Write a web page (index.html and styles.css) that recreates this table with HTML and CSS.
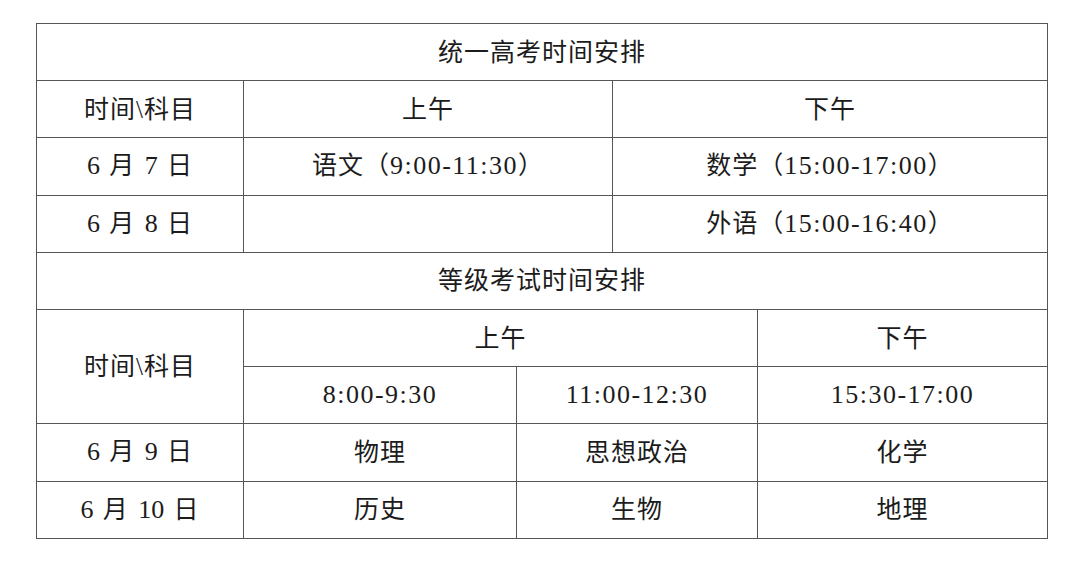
FILE: index.html
```html
<!DOCTYPE html>
<html lang="zh-CN">
<head>
<meta charset="utf-8">
<title>高考时间安排</title>
<link rel="stylesheet" href="styles.css">
</head>
<body>
<table class="sched">
  <colgroup>
    <col class="c1"><col class="c2"><col class="c3"><col class="c4"><col class="c5">
  </colgroup>
  <tbody>
    <tr><td colspan="5" class="title">统一高考时间安排</td></tr>
    <tr><td>时间\科目</td><td colspan="2">上午</td><td colspan="2">下午</td></tr>
    <tr><td class="date"><span class="n">6</span> 月 <span class="n">7</span> 日</td><td colspan="2">语文（<span class="n">9:00-11:30</span>）</td><td colspan="2">数学（<span class="n">15:00-17:00</span>）</td></tr>
    <tr><td class="date"><span class="n">6</span> 月 <span class="n">8</span> 日</td><td colspan="2"></td><td colspan="2">外语（<span class="n">15:00-16:40</span>）</td></tr>
    <tr><td colspan="5" class="title">等级考试时间安排</td></tr>
    <tr><td rowspan="2">时间\科目</td><td colspan="3">上午</td><td>下午</td></tr>
    <tr><td><span class="n">8:00-9:30</span></td><td colspan="2"><span class="n">11:00-12:30</span></td><td><span class="n">15:30-17:00</span></td></tr>
    <tr><td class="date"><span class="n">6</span> 月 <span class="n">9</span> 日</td><td>物理</td><td colspan="2">思想政治</td><td>化学</td></tr>
    <tr><td class="date"><span class="n">6</span> 月 <span class="n">10</span> 日</td><td>历史</td><td colspan="2">生物</td><td>地理</td></tr>
  </tbody>
</table>
</body>
</html>
```
FILE: styles.css
```css
html, body {
  margin: 0;
  padding: 0;
  background: #ffffff;
}
body {
  font-family: "Liberation Serif", "Noto Sans CJK SC", serif;
  color: #1c1c1c;
}
.sched {
  border-collapse: collapse;
  table-layout: fixed;
  width: 1011px;
  margin: 23px 0 0 36px;
}
.c1 { width: 207px; }
.c2 { width: 273px; }
.c3 { width: 96px; }
.c4 { width: 145px; }
.c5 { width: 290px; }
.sched tr { height: 57.2px; }
.sched td {
  border: 1px solid #555555;
  padding: 0;
  text-align: center;
  vertical-align: middle;
  font-size: 25px;
  line-height: 1;
  letter-spacing: 1px;
  white-space: nowrap;
}
.n {
  font-family: "Liberation Serif", serif;
  font-size: 26px;
  letter-spacing: 1.5px;
}
.date {
  word-spacing: 2px;
}
.date .n {
  letter-spacing: 0;
}
```
